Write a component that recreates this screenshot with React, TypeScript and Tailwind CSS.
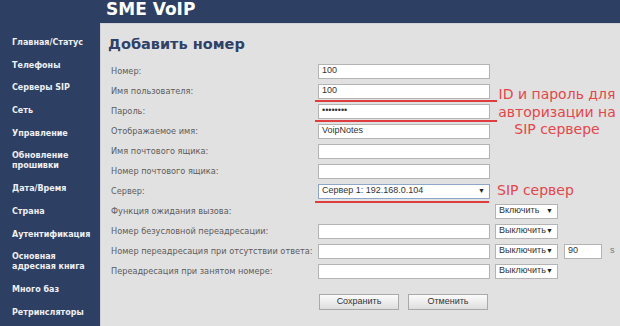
import React from 'react';

const menu: string[][] = [
  ['Главная/Статус'],
  ['Телефоны'],
  ['Серверы SIP'],
  ['Сеть'],
  ['Управление'],
  ['Обновление', 'прошивки'],
  ['Дата/Время'],
  ['Страна'],
  ['Аутентификация'],
  ['Основная', 'адресная книга'],
  ['Много баз'],
  ['Ретринсляторы'],
];

interface Row {
  label: string;
  value?: string;
  kind: 'input' | 'select' | 'none';
  extra?: string;
  timeout?: boolean;
}

const rows: Row[] = [
  { label: 'Номер:', value: '100', kind: 'input' },
  { label: 'Имя пользователя:', value: '100', kind: 'input' },
  { label: 'Пароль:', value: '••••••••', kind: 'input' },
  { label: 'Отображаемое имя:', value: 'VoipNotes', kind: 'input' },
  { label: 'Имя почтового ящика:', kind: 'input' },
  { label: 'Номер почтового ящика:', kind: 'input' },
  { label: 'Сервер:', value: 'Сервер 1: 192.168.0.104', kind: 'select' },
  { label: 'Функция ожидания вызова:', kind: 'none', extra: 'Включить' },
  { label: 'Номер безусловной переадресации:', kind: 'input', extra: 'Выключить' },
  { label: 'Номер переадресация при отсутствии ответа:', kind: 'input', extra: 'Выключить', timeout: true },
  { label: 'Переадресация при занятом номере:', kind: 'input', extra: 'Выключить' },
];

function Field({ value }: { value?: string }) {
  return (
    <div className="w-[172px] h-[15px] shrink-0 bg-white border border-[#b4b4b4] pl-[3px] flex items-center text-[9px] text-[#333] font-['Liberation_Sans',sans-serif]">
      {value}
    </div>
  );
}

function Select({ value, width, blue }: { value: string; width: string; blue?: boolean }) {
  return (
    <div
      className={`${width} h-[15px] shrink-0 bg-white border ${blue ? 'border-[#8ea6c8]' : 'border-[#b4b4b4]'} pl-[3px] pr-[4px] flex items-center justify-between text-[9px] text-[#333] font-['Liberation_Sans',sans-serif]`}
    >
      <span>{value}</span>
      <span className="text-[7px] text-[#222]">▼</span>
    </div>
  );
}

export default function App() {
  return (
    <div className="relative w-[620px] h-[326px] overflow-hidden bg-[#2d3f62] flex font-['DejaVu_Sans',sans-serif]">
      <div className="w-[100px] shrink-0 pt-[38px] pl-[12px] flex flex-col gap-[12.7px]">
        {menu.map((item) => (
          <div key={item[0]} className="text-[8px] leading-[10px] font-bold text-[#eef0f4]">
            {item.map((l) => (
              <div key={l}>{l}</div>
            ))}
          </div>
        ))}
      </div>

      <div className="flex-1 flex flex-col">
        <div className="h-[23px] shrink-0 pl-[6px] text-[17px] leading-[19px] font-bold text-white">SME VoIP</div>
        <div className="flex-1 bg-[#e1e1e1] border-l border-t border-[#cfd2d8] pt-[10px]">
          <div className="pl-[7px] text-[14.5px] leading-[20px] font-bold text-[#2f4167]">Добавить номер</div>
          <div className="mt-[7px] flex flex-col">
            {rows.map((r) => (
              <div key={r.label} className="h-[20px] flex items-center">
                <div className="w-[217px] shrink-0 pl-[10px] text-[8.2px] text-[#5c5c5c] whitespace-nowrap">{r.label}</div>
                {r.kind === 'input' && <Field value={r.value} />}
                {r.kind === 'select' && <Select value={r.value || ''} width="w-[172px]" blue />}
                {r.kind === 'none' && <div className="w-[172px] shrink-0" />}
                {r.extra && (
                  <div className="ml-[5px]">
                    <Select value={r.extra} width="w-[63px]" />
                  </div>
                )}
                {r.timeout && (
                  <>
                    <div className="ml-[6px] w-[38px] h-[15px] shrink-0 bg-white border border-[#b4b4b4] pl-[3px] flex items-center text-[9px] text-[#333] font-['Liberation_Sans',sans-serif]">
                      90
                    </div>
                    <div className="ml-[8px] text-[9px] text-[#777] font-['Liberation_Sans',sans-serif]">s</div>
                  </>
                )}
              </div>
            ))}
          </div>
          <div className="mt-[13px] pl-[218px] flex gap-[9px]">
            {['Сохранить', 'Отменить'].map((b) => (
              <div
                key={b}
                className="w-[80px] h-[16px] border border-[#a9a9a9] bg-gradient-to-b from-[#fbfbfb] to-[#dedede] flex items-center justify-center text-[9px] text-[#333] font-['Liberation_Sans',sans-serif]"
              >
                {b}
              </div>
            ))}
          </div>
        </div>
      </div>

      {/* annotations drawn over the form */}
      <div className="absolute left-[315px] top-[100px] w-[182px] h-[2px] bg-[#df3d40]" />
      <div className="absolute left-[315px] top-[120px] w-[182px] h-[2px] bg-[#df3d40]" />
      <div className="absolute left-[315px] top-[201px] w-[174px] h-[2px] bg-[#df3d40]" />
      <div className="absolute left-[497px] top-[86px] w-[120px] text-center text-[14px] leading-[17.5px] text-[#e2474b] whitespace-nowrap">
        <div>ID и пароль для</div>
        <div>авторизации на</div>
        <div>SIP сервере</div>
      </div>
      <div className="absolute left-[497px] top-[181px] text-[14px] leading-[18px] text-[#e2474b] whitespace-nowrap">SIP сервер</div>
    </div>
  );
}
